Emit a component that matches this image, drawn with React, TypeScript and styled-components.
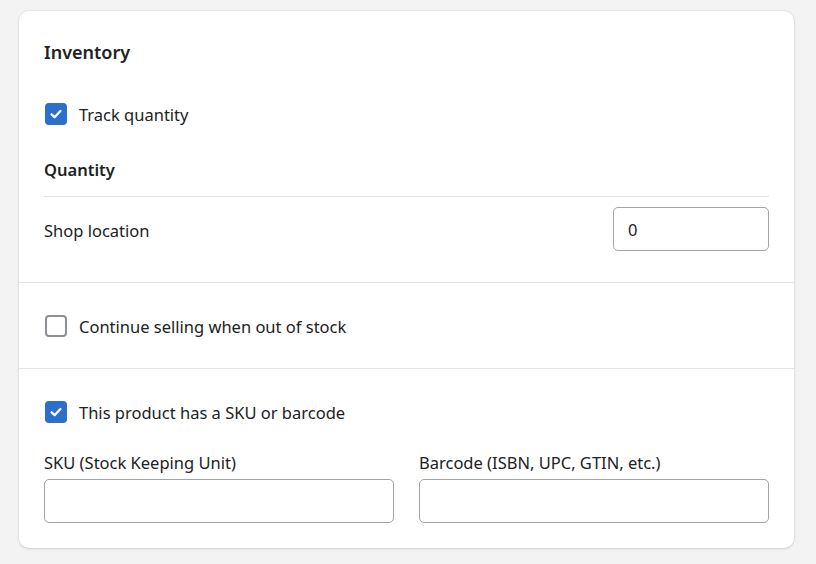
import React from "react";
import styled, { createGlobalStyle } from "styled-components";

const GlobalStyle = createGlobalStyle`
  html, body {
    margin: 0;
    padding: 0;
    background: #f3f3f3;
  }
  body {
    font-family: "Noto Sans", "Open Sans", sans-serif;
    color: #202223;
    -webkit-font-smoothing: antialiased;
  }
`;

const Page = styled.div`
  padding: 11px 22px 15px 19px;
`;

const Card = styled.div`
  background: #ffffff;
  border-radius: 10px;
  box-shadow: 0 0 0 1px rgba(0, 0, 0, 0.03), 0 1px 3px rgba(0, 0, 0, 0.12);
  overflow: hidden;
`;

const Section = styled.div<{ $top: number; $bottom: number }>`
  padding: ${(p) => p.$top}px 25px ${(p) => p.$bottom}px 25px;
  & + & {
    border-top: 1px solid #e1e3e5;
  }
`;

const Title = styled.h2`
  margin: 0;
  font-size: 18px;
  line-height: 32px;
  font-weight: 600;
`;

const CheckRow = styled.label<{ $mt?: number }>`
  display: flex;
  align-items: center;
  gap: 12px;
  height: 24px;
  margin-top: ${(p) => p.$mt ?? 0}px;
  font-size: 16.5px;
  cursor: pointer;
`;

const Box = styled.span<{ $checked: boolean }>`
  box-sizing: border-box;
  width: 22px;
  height: 22px;
  margin-left: 1px;
  border-radius: 4px;
  display: flex;
  align-items: center;
  justify-content: center;
  background: ${(p) => (p.$checked ? "#2c6ecb" : "#ffffff")};
  border: ${(p) => (p.$checked ? "none" : "2px solid #8c9196")};
`;

const SubTitle = styled.div`
  margin-top: 32px;
  font-size: 16.5px;
  font-weight: 600;
  line-height: 24px;
  padding-bottom: 14px;
  border-bottom: 1px solid #e1e3e5;
`;

const LocationRow = styled.div`
  display: flex;
  align-items: center;
  justify-content: space-between;
  padding-top: 10px;
  font-size: 16.5px;
  line-height: 26px;
`;

const LocationName = styled.span`
  padding-top: 3px;
`;

const Input = styled.input<{ $width?: string }>`
  box-sizing: border-box;
  width: ${(p) => p.$width ?? "100%"};
  height: 44px;
  padding: 0 14px;
  border: 1px solid #a1a4a8;
  border-radius: 5px;
  font-family: inherit;
  font-size: 16.5px;
  color: #202223;
  background: #fff;
  outline: none;
`;

const FieldGrid = styled.div`
  display: grid;
  grid-template-columns: 1fr 1fr;
  column-gap: 25px;
  margin-top: 27px;
`;

const Field = styled.div`
  display: flex;
  flex-direction: column;
  gap: 4px;
`;

const FieldLabel = styled.span`
  font-size: 16.5px;
  line-height: 24px;
`;

function Check({ checked, label, mt }: { checked: boolean; label: string; mt?: number }) {
  return (
    <CheckRow $mt={mt}>
      <Box $checked={checked}>
        {checked && (
          <svg width="16" height="16" viewBox="0 0 16 16" fill="none">
            <path
              d="M3.6 8.3l3 2.9 5.8-6.2"
              stroke="#ffffff"
              strokeWidth="2.3"
              strokeLinecap="round"
              strokeLinejoin="round"
            />
          </svg>
        )}
      </Box>
      <span>{label}</span>
    </CheckRow>
  );
}

export default function App() {
  return (
    <>
      <GlobalStyle />
      <Page>
        <Card>
          <Section $top={25} $bottom={31}>
            <Title>Inventory</Title>
            <Check checked label="Track quantity" mt={34} />
            <SubTitle>Quantity</SubTitle>
            <LocationRow>
              <LocationName>Shop location</LocationName>
              <Input $width="156px" defaultValue="0" />
            </LocationRow>
          </Section>
          <Section $top={31} $bottom={30}>
            <Check checked={false} label="Continue selling when out of stock" />
          </Section>
          <Section $top={31} $bottom={25}>
            <Check checked label="This product has a SKU or barcode" />
            <FieldGrid>
              <Field>
                <FieldLabel>SKU (Stock Keeping Unit)</FieldLabel>
                <Input />
              </Field>
              <Field>
                <FieldLabel>Barcode (ISBN, UPC, GTIN, etc.)</FieldLabel>
                <Input />
              </Field>
            </FieldGrid>
          </Section>
        </Card>
      </Page>
    </>
  );
}
